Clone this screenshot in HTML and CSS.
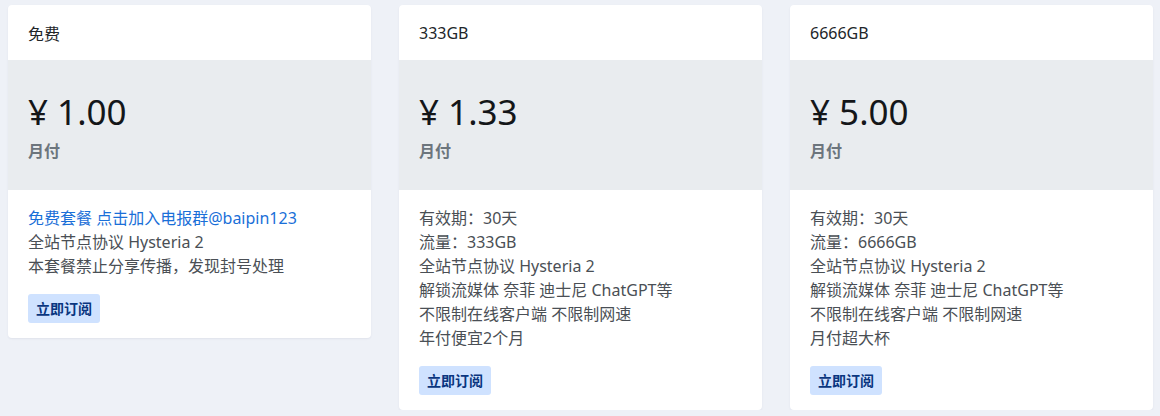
FILE: index.html
```html
<!DOCTYPE html>
<html lang="zh-CN">
<head>
<meta charset="utf-8">
<title>Plans</title>
<link rel="stylesheet" href="styles.css">
</head>
<body>
<div class="plans">
  <div class="card">
    <div class="card-head">免费</div>
    <div class="card-price">
      <div class="price">¥ 1.00</div>
      <div class="period">月付</div>
    </div>
    <div class="card-body">
      <div class="line link">免费套餐 点击加入电报群@baipin123</div>
      <div class="line">全站节点协议 Hysteria 2</div>
      <div class="line">本套餐禁止分享传播，发现封号处理</div>
      <button class="btn">立即订阅</button>
    </div>
  </div>
  <div class="card">
    <div class="card-head">333GB</div>
    <div class="card-price">
      <div class="price">¥ 1.33</div>
      <div class="period">月付</div>
    </div>
    <div class="card-body">
      <div class="line">有效期：30天</div>
      <div class="line">流量：333GB</div>
      <div class="line">全站节点协议 Hysteria 2</div>
      <div class="line">解锁流媒体 奈菲 迪士尼 ChatGPT等</div>
      <div class="line">不限制在线客户端 不限制网速</div>
      <div class="line">年付便宜2个月</div>
      <button class="btn">立即订阅</button>
    </div>
  </div>
  <div class="card">
    <div class="card-head">6666GB</div>
    <div class="card-price">
      <div class="price">¥ 5.00</div>
      <div class="period">月付</div>
    </div>
    <div class="card-body">
      <div class="line">有效期：30天</div>
      <div class="line">流量：6666GB</div>
      <div class="line">全站节点协议 Hysteria 2</div>
      <div class="line">解锁流媒体 奈菲 迪士尼 ChatGPT等</div>
      <div class="line">不限制在线客户端 不限制网速</div>
      <div class="line">月付超大杯</div>
      <button class="btn">立即订阅</button>
    </div>
  </div>
</div>
</body>
</html>
```

FILE: styles.css
```css
html, body {
  margin: 0;
  padding: 0;
  background: #eef1f7;
  font-family: "Noto Sans", "Noto Sans CJK SC", sans-serif;
  color: #212529;
}
.plans {
  display: grid;
  grid-template-columns: repeat(3, 363px);
  column-gap: 28px;
  padding: 5px 8px 0 8px;
  align-items: start;
}
.card {
  background: #fff;
  border-radius: 4px;
  box-shadow: 0 1px 2px rgba(60, 70, 100, 0.08);
  overflow: hidden;
}
.card-head {
  height: 55px;
  box-sizing: border-box;
  padding: 0 20px;
  display: flex;
  align-items: center;
  font-size: 16px;
  color: #212529;
}
.card-price {
  background: #e9ecef;
  height: 130px;
  box-sizing: border-box;
  padding: 28px 20px 0 20px;
}
.price {
  font-size: 35px;
  line-height: 48px;
  color: #141619;
}
.period {
  margin-top: 3px;
  font-size: 16px;
  line-height: 24px;
  font-weight: 700;
  color: #6c757d;
}
.card-body {
  padding: 16px 20px 15px 20px;
  font-size: 16px;
  color: #4a4f55;
}
.line {
  line-height: 24px;
}
.link {
  color: #1a6fd8;
}
.btn {
  margin-top: 16px;
  display: block;
  border: 0;
  border-radius: 3px;
  background: #cfe2ff;
  color: #0a3680;
  font-family: "Noto Sans CJK SC", sans-serif;
  font-size: 14px;
  font-weight: 700;
  line-height: 21px;
  padding: 4px 8px;
}
```
